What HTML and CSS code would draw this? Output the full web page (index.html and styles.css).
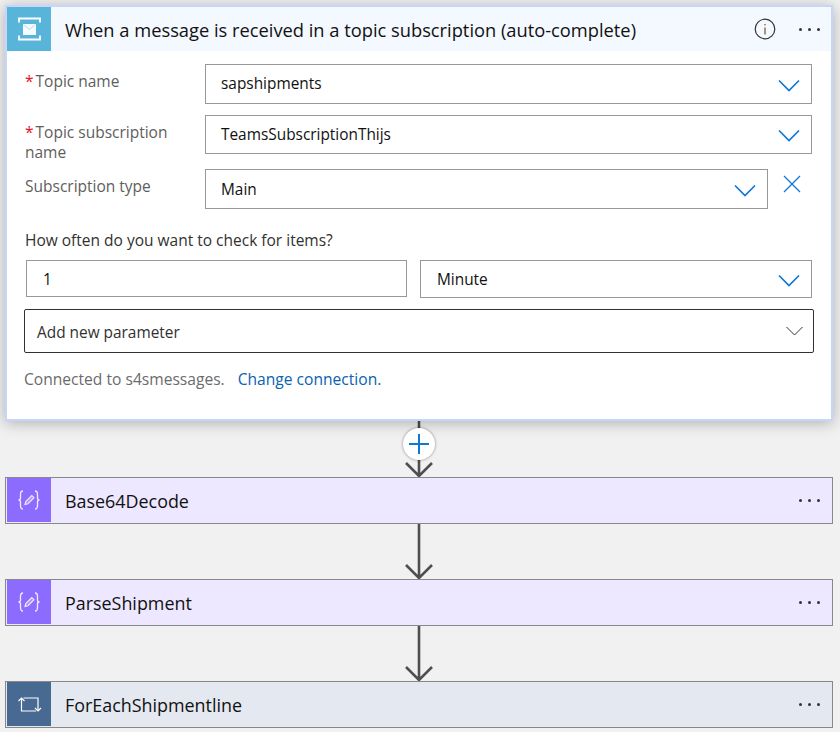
FILE: index.html
```html
<!DOCTYPE html>
<html lang="en">
<head>
<meta charset="utf-8">
<title>Flow</title>
<link rel="stylesheet" href="styles.css">
</head>
<body>
<main class="flow">
  <section class="trigger">
    <header class="head head-trigger">
      <div class="tile tile-sb">
        <svg width="44" height="44" viewBox="0 0 44 44"><path d="M12 15.500V11.500h21v4M12 28.500V32.500h21v-4" fill="none" stroke="#fff" stroke-width="1.800"/><rect x="16" y="17" width="13" height="11" fill="#f4fafd"/><path d="M16.500 17.500l6 5 6-5" fill="none" stroke="#b5dcec" stroke-width="1"/></svg>
      </div>
      <h1 class="title">When a message is received in a topic subscription (auto-complete)</h1>
      <svg class="info" width="22" height="22" viewBox="0 0 22 22"><circle cx="11" cy="11" r="9.800" fill="none" stroke="#333" stroke-width="1.200"/><rect x="10.400" y="9.500" width="1.200" height="7" fill="#7a5228"/><rect x="10.400" y="6" width="1.200" height="1.400" fill="#7a5228"/></svg>
      <div class="more"><i></i><i></i><i></i></div>
    </header>
    <div class="body">
      <div class="row row-1">
        <label class="lab"><span class="req">*</span>Topic name</label>
        <div class="select s-full h-40"><span class="val">sapshipments</span><svg class="chev" width="22" height="13" viewBox="0 0 22 13"><path d="M1 1.500l10 10 10-10" fill="none" stroke="#0f78d4" stroke-width="1.700"/></svg></div>
      </div>
      <div class="row row-2">
        <label class="lab"><span class="req">*</span>Topic subscription<br>name</label>
        <div class="select s-full h-39"><span class="val">TeamsSubscriptionThijs</span><svg class="chev" width="22" height="13" viewBox="0 0 22 13"><path d="M1 1.500l10 10 10-10" fill="none" stroke="#0f78d4" stroke-width="1.700"/></svg></div>
      </div>
      <div class="row row-3">
        <label class="lab">Subscription type</label>
        <div class="select s-short h-40"><span class="val">Main</span><svg class="chev" width="22" height="13" viewBox="0 0 22 13"><path d="M1 1.500l10 10 10-10" fill="none" stroke="#0f78d4" stroke-width="1.700"/></svg></div>
        <svg class="close" width="18" height="18" viewBox="0 0 18 18"><path d="M1 1l16 16M17 1L1 17" fill="none" stroke="#0f78d4" stroke-width="1.300"/></svg>
      </div>
      <p class="often">How often do you want to check for items?</p>
      <div class="recur">
        <div class="select s-num"><span class="val">1</span></div>
        <div class="select s-unit"><span class="val">Minute</span><svg class="chev" width="22" height="13" viewBox="0 0 22 13"><path d="M1 1.500l10 10 10-10" fill="none" stroke="#0f78d4" stroke-width="1.700"/></svg></div>
      </div>
      <div class="addparam"><span class="val">Add new parameter</span><svg width="17" height="10" viewBox="0 0 17 10"><path d="M.500 1l8 8 8-8" fill="none" stroke="#333" stroke-width="1"/></svg></div>
      <p class="conn">Connected to s4smessages.<a class="link" href="#">Change connection.</a></p>
    </div>
  </section>

  <div class="link-arrow first">
    <svg class="arrow" width="30" height="56" viewBox="0 0 30 56"><path d="M15 0v55M2 42l13 13 13-13" fill="none" stroke="#4f4f4f" stroke-width="2.600"/></svg>
    <div class="plus"><svg width="20" height="20" viewBox="0 0 20 20"><path d="M0 10h20M10 0v20" fill="none" stroke="#0f78d4" stroke-width="2"/></svg></div>
  </div>

  <section class="action act-purple">
    <div class="tile tile-purple">
      <svg width="44" height="44" viewBox="0 0 44 44"><g fill="none" stroke="#f0eaff" stroke-width="1.300"><path d="M16 13c-2.500 0-2.500 1.500-2.500 3.500v3.500c0 1-.8 2-2 2 1.200 0 2 1 2 2v3.500c0 2 0 3.500 2.500 3.500"/><path d="M28 13c2.500 0 2.500 1.500 2.500 3.500v3.500c0 1 .8 2 2 2-1.200 0-2 1-2 2v3.500c0 2 0 3.500-2.500 3.500"/><path d="M18 26.500l.8-3 6-6 2.200 2.200-6 6z" fill="#a993ff" stroke-width="1.100"/></g></svg>
    </div>
    <h2 class="title">Base64Decode</h2>
    <div class="more"><i></i><i></i><i></i></div>
  </section>

  <div class="link-arrow">
    <svg class="arrow" width="30" height="55" viewBox="0 0 30 55"><path d="M15 0v54M2 41l13 13 13-13" fill="none" stroke="#4f4f4f" stroke-width="2.600"/></svg>
  </div>

  <section class="action act-purple">
    <div class="tile tile-purple">
      <svg width="44" height="44" viewBox="0 0 44 44"><g fill="none" stroke="#f0eaff" stroke-width="1.300"><path d="M16 13c-2.500 0-2.500 1.500-2.500 3.500v3.500c0 1-.8 2-2 2 1.200 0 2 1 2 2v3.500c0 2 0 3.500 2.500 3.500"/><path d="M28 13c2.500 0 2.500 1.500 2.500 3.500v3.500c0 1 .8 2 2 2-1.200 0-2 1-2 2v3.500c0 2 0 3.500-2.500 3.500"/><path d="M18 26.500l.8-3 6-6 2.200 2.200-6 6z" fill="#a993ff" stroke-width="1.100"/></g></svg>
    </div>
    <h2 class="title">ParseShipment</h2>
    <div class="more"><i></i><i></i><i></i></div>
  </section>

  <div class="link-arrow">
    <svg class="arrow" width="30" height="55" viewBox="0 0 30 55"><path d="M15 0v54M2 41l13 13 13-13" fill="none" stroke="#4f4f4f" stroke-width="2.600"/></svg>
  </div>

  <section class="action act-slate">
    <div class="tile tile-slate">
      <svg width="44" height="44" viewBox="0 0 44 44"><g fill="none" stroke="#fff" stroke-width="1.200"><path d="M14.500 16.500V29H29"/><path d="M11.500 19l3-3 3 3"/><path d="M16.500 16H31v12.500"/><path d="M28 26l3 3 3-3"/></g></svg>
    </div>
    <h2 class="title">ForEachShipmentline</h2>
    <div class="more"><i></i><i></i><i></i></div>
  </section>
</main>
</body>
</html>
```
FILE: styles.css
```css
* { box-sizing: border-box; }
html, body { margin: 0; height: 100%; }
body {
  background: #f1f1f1;
  font-family: "Open Sans", "Noto Sans", sans-serif;
  color: #1b1b1b;
  overflow: hidden;
}
.flow {
  display: flex;
  flex-direction: column;
  padding: 5px 7px 0 5px;
}
.trigger {
  height: 416px;
  background: #fff;
  border: 2px solid #c6d5fb;
  box-shadow: 0 2px 14px rgba(0, 0, 0, .28);
  position: relative;
  z-index: 1;
}
.head, .action { display: flex; align-items: center; }
.head { height: 44px; }
.head-trigger { background: #f4f8ff; }
.tile {
  flex: none;
  width: 44px;
  height: 44px;
  display: flex;
}
.tile-sb { background: #59b4d9; }
.tile-purple { background: #8c6cff; }
.tile-slate { background: #486991; }
.title {
  margin: 0 0 0 14px;
  flex: 1;
  font-size: 18.300px;
  font-weight: 400;
  color: #111;
  white-space: nowrap;
}
.info { flex: none; margin-right: 23px; }
.more {
  flex: none;
  display: flex;
  gap: 6px;
  width: 21px;
  margin-right: 11px;
}
.more i {
  width: 3px;
  height: 3px;
  border-radius: 50%;
  background: #333;
}
.body { padding: 13px 19px 0 18px; }
.row { display: flex; align-items: flex-start; }
.row-2 { margin-top: 11px; height: 39px; }
.row-3 { margin-top: 15px; }
.lab {
  flex: none;
  width: 180px;
  padding-top: 7px;
  font-size: 15.500px;
  line-height: 20px;
  color: #605e5c;
}
.req { color: #e81123; margin-right: 2px; }
.select {
  display: flex;
  align-items: center;
  justify-content: space-between;
  border: 1px solid #989898;
  background: #fff;
  padding: 0 11px 0 15px;
}
.val {
  font-size: 15.400px;
  color: #111;
  margin-top: -1px;
}
.row-3 .val { margin-top: 0; }
.recur .val { margin-top: 1px; }
.s-full { width: 607px; }
.s-short { width: 563px; }
.h-40 { height: 40px; }
.h-39 { height: 39px; }
.close { margin: 6px 0 0 15px; }
.chev { flex: none; margin-top: 2px; }
.often {
  margin: 21px 0 0;
  font-size: 15.500px;
  line-height: 20px;
  color: #323130;
}
.recur { display: flex; gap: 13px; margin: 10px 0 0 1px; }
.s-num { width: 381px; height: 37px; padding-left: 16px; }
.s-unit { width: 392px; height: 38px; padding-left: 16px; }
.addparam {
  display: flex;
  align-items: center;
  justify-content: space-between;
  height: 44px;
  width: 790px;
  margin: 11px 0 0 -1px;
  border: 1px solid #323130;
  border-radius: 2px;
  padding: 0 10px 0 12px;
}
.addparam .val { color: #323130; margin-top: 3px; }
.conn {
  margin: 16px 0 0 -1px;
  font-size: 15.600px;
  line-height: 20px;
  color: #6b6b6b;
}
.link { color: #0a62b0; text-decoration: none; margin-left: 13px; }
.link-arrow {
  position: relative;
  display: flex;
  justify-content: center;
}
.arrow { display: block; }
.plus {
  position: absolute;
  left: 50%;
  top: 7px;
  margin-left: -16px;
  width: 32px;
  height: 32px;
  border-radius: 50%;
  background: #fff;
  box-shadow: 0 0 3px rgba(0, 0, 0, .45);
  display: flex;
  align-items: center;
  justify-content: center;
  z-index: 2;
}
.action {
  height: 47px;
  border: 1px solid #8a8886;
  padding: 0 0 1px 1px;
}
.action .title {
  align-self: stretch;
  margin: 0;
  padding-left: 14px;
  font-size: 17.900px;
  line-height: 47px;
}
.act-purple { background: #ede8ff; }
.act-slate { background: #e4e8f0; }
.action .more { margin-right: 12px; }
```
